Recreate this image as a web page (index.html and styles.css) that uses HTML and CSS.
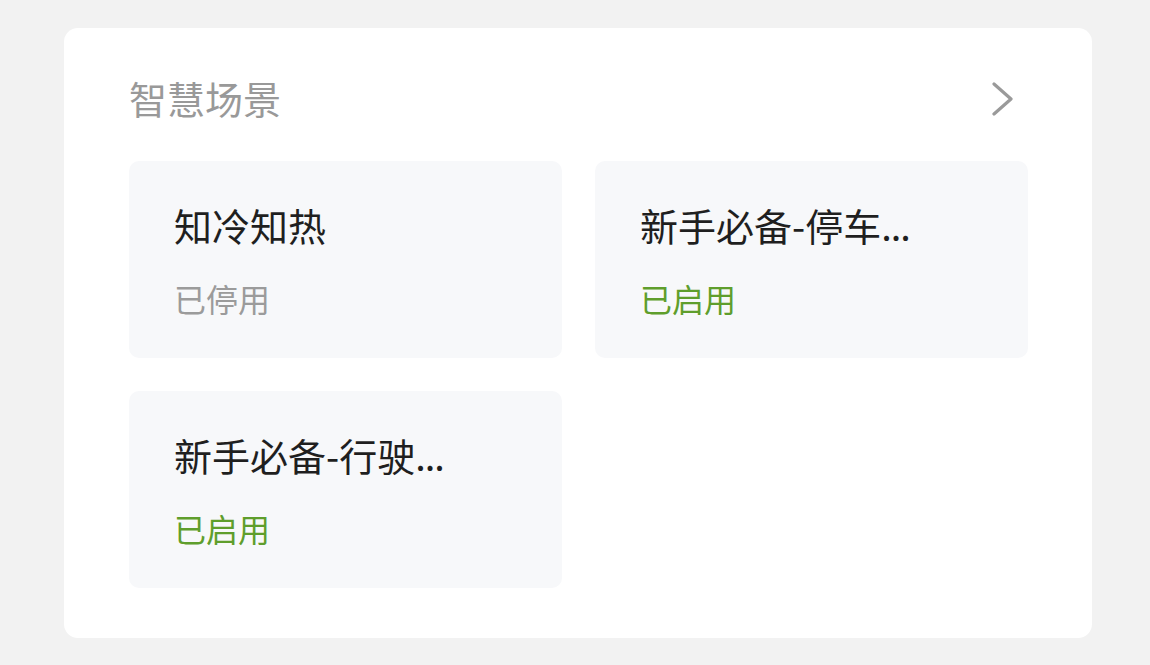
FILE: index.html
```html
<!DOCTYPE html>
<html lang="zh-CN">
<head>
<meta charset="utf-8">
<title>智慧场景</title>
<link rel="stylesheet" href="styles.css">
</head>
<body>
<div class="card">
  <div class="header">
    <span class="heading">智慧场景</span>
    <svg class="chevron" width="24" height="34" viewBox="0 0 24 34" aria-hidden="true">
      <polyline points="3,2 20,17 3,32" fill="none" stroke="#9a9a9a" stroke-width="3.2" stroke-linecap="round" stroke-linejoin="round"/>
    </svg>
  </div>
  <div class="grid">
    <div class="tile">
      <div class="tile-title">知冷知热</div>
      <div class="status off">已停用</div>
    </div>
    <div class="tile">
      <div class="tile-title">新手必备-停车<span class="dots">...</span></div>
      <div class="status on">已启用</div>
    </div>
    <div class="tile">
      <div class="tile-title">新手必备-行驶<span class="dots">...</span></div>
      <div class="status on">已启用</div>
    </div>
  </div>
</div>
</body>
</html>
```
FILE: styles.css
```css
html, body {
  margin: 0;
  padding: 0;
  background: #f2f2f2;
  font-family: "Noto Sans CJK SC", "Noto Sans", sans-serif;
}

.card {
  box-sizing: border-box;
  width: 1028px;
  height: 610px;
  margin: 28px 0 0 64px;
  padding: 43px 64px 50px 65px;
  background: #ffffff;
  border-radius: 14px;
}

.header {
  display: flex;
  align-items: center;
  justify-content: space-between;
  height: 54px;
  margin-bottom: 36px;
}

.heading {
  font-size: 38px;
  line-height: 54px;
  color: #999999;
}

.chevron {
  margin: 2px 13px 0 0;
  display: block;
}

.grid {
  display: grid;
  grid-template-columns: 433px 433px;
  grid-auto-rows: 197px;
  column-gap: 33px;
  row-gap: 33px;
}

.tile {
  box-sizing: border-box;
  background: #f7f8fa;
  border-radius: 10px;
  padding: 39px 44px 0 45px;
}

.tile-title {
  font-size: 38px;
  line-height: 50px;
  color: #1f1f1f;
  white-space: nowrap;
}

.dots {
  letter-spacing: -1px;
}

.status {
  margin-top: 26px;
  font-size: 32px;
  line-height: 44px;
}

.status.off {
  color: #9b9b9b;
}

.status.on {
  color: #5f9e2c;
}
```
